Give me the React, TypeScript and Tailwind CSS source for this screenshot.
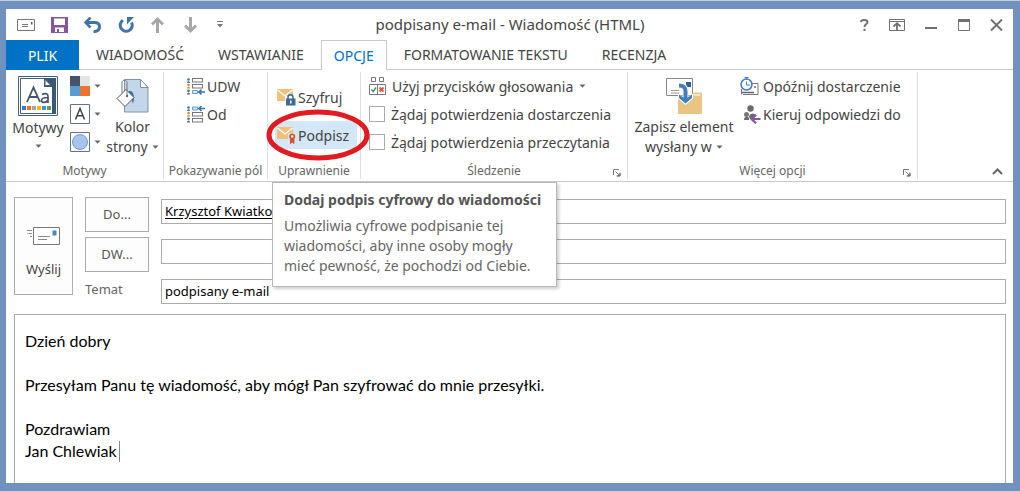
import React, { useState } from 'react';

const tabs = ['WIADOMOŚĆ', 'WSTAWIANIE', 'OPCJE', 'FORMATOWANIE TEKSTU', 'RECENZJA'];

const initialBody = `Dzień dobry

Przesyłam Panu tę wiadomość, aby mógł Pan szyfrować do mnie przesyłki.

Pozdrawiam
Jan Chlewiak`;

function Arrow() {
    return (
        <svg width="7" height="4" viewBox="0 0 7 4" className="shrink-0" aria-hidden="true">
            <path d="M0.5 0.5h6L3.5 3.7z" fill="#666" />
        </svg>
    );
}

function Launcher({ label }: { label: string }) {
    return (
        <button type="button" aria-label={label} className="absolute right-1.5 bottom-0.5">
            <svg width="8" height="8" viewBox="0 0 8 8" fill="none" stroke="#777">
                <path d="M0.5 6V0.5H6M2.5 2.5l4 4M7 3.5V7H3.5" />
                <path d="M7 4.5V7H4.5z" fill="#777" />
            </svg>
        </button>
    );
}

function Group({ label, className, launcher, children }: { label: string; className: string; launcher?: boolean; children: React.ReactNode }) {
    return (
        <section aria-label={label} className={`relative flex shrink-0 flex-col border-r border-[#dcdfe2] ${className}`}>
            <div className="flex flex-1">{children}</div>
            <div className="text-center text-[12px] leading-4 text-[#666]">{label}</div>
            {launcher && <Launcher label={`${label}: opcje`} />}
        </section>
    );
}

function QuickAccess() {
    return (
        <div className="flex items-center">
            <svg width="18" height="12" viewBox="0 0 18 12" className="mr-4" fill="none" stroke="#777" aria-hidden="true">
                <path d="M0.5 0.5h17v11H0.5zM5 5.5h6M5 7.5h6" />
                <path d="M14 3h1.5v2.5H14z" fill="#555" stroke="none" />
            </svg>
            <button type="button" aria-label="Zapisz" className="mr-4">
                <svg width="17" height="16" viewBox="0 0 17 16">
                    <path fillRule="evenodd" d="M0 0h17v16H0zM3 1.5V8h11V1.5zM4 10.5V15h2v-3h2v3h5v-4.5z" fill="#8356a0" />
                </svg>
            </button>
            <button type="button" aria-label="Cofnij" className="mr-4">
                <svg width="18" height="16" viewBox="0 0 18 16" fill="none" stroke="#3f74ab">
                    <path d="M3 5.5h7.5c3 0 5 1.5 5 4.2 0 3-2.2 4.8-6 5" strokeWidth="3" />
                    <path d="M6.5 0.5L1.5 5.5l5 5" strokeWidth="2.6" />
                </svg>
            </button>
            <button type="button" aria-label="Ponów" className="mr-4">
                <svg width="17" height="16" viewBox="0 0 17 16" fill="none" stroke="#3f74ab">
                    <path d="M5 3.2A6 6 0 1 0 13.5 5.5" strokeWidth="3" />
                    <path d="M9 7.5V0h7l-2.5 2.5z" fill="#3f74ab" stroke="none" />
                </svg>
            </button>
            <button type="button" aria-label="Poprzedni element" className="mr-5">
                <svg width="13" height="16" viewBox="0 0 13 16" fill="none" stroke="#a6a6a6">
                    <path d="M6.5 16V2" strokeWidth="3" />
                    <path d="M1 7.5L6.5 2 12 7.5" strokeWidth="2.8" />
                </svg>
            </button>
            <button type="button" aria-label="Następny element" className="mr-5">
                <svg width="13" height="16" viewBox="0 0 13 16" fill="none" stroke="#a6a6a6">
                    <path d="M6.5 0v14" strokeWidth="3" />
                    <path d="M1 8.5l5.5 5.5L12 8.5" strokeWidth="2.8" />
                </svg>
            </button>
            <button type="button" aria-label="Dostosuj pasek">
                <svg width="6" height="7" viewBox="0 0 6 7">
                    <path d="M0 0h6v1H0zM0 3h6L3 6.5z" fill="#777" />
                </svg>
            </button>
        </div>
    );
}

function WindowButtons() {
    return (
        <div className="flex items-center">
            <button type="button" aria-label="Pomoc" className="mr-5">
                <svg width="9" height="12" viewBox="0 0 9 12" fill="none" stroke="#707070" strokeWidth="2">
                    <path d="M1 3c0-1.3 1.3-2 3.2-2S7.5 1.8 7.5 3.2c0 1.8-3 1.8-3 4.8M4.5 9.8V12" />
                </svg>
            </button>
            <button type="button" aria-label="Opcje wyświetlania wstążki" className="mr-5">
                <svg width="16" height="12" viewBox="0 0 16 12" fill="none" stroke="#707070">
                    <path d="M0.5 0.5h15v11H0.5zM0.5 2.5h15" />
                    <path d="M8 11V4.5M4.5 7.5L8 4.2l3.5 3.3" strokeWidth="1.8" />
                </svg>
            </button>
            <button type="button" aria-label="Minimalizuj" className="mr-5">
                <svg width="13" height="12" viewBox="0 0 13 12"><path d="M0 8h12v2H0z" fill="#707070" /></svg>
            </button>
            <button type="button" aria-label="Maksymalizuj" className="mr-5">
                <svg width="12" height="12" viewBox="0 0 12 12" fill="none" stroke="#707070">
                    <path d="M0.5 0.5h11v11H0.5z" />
                    <path d="M0 1.5h12" strokeWidth="3" />
                </svg>
            </button>
            <button type="button" aria-label="Zamknij">
                <svg width="13" height="12" viewBox="0 0 13 12" fill="none" stroke="#707070" strokeWidth="2">
                    <path d="M1 0.5l11 11M12 0.5l-11 11" />
                </svg>
            </button>
        </div>
    );
}

function ThemesIcon() {
    return (
        <svg width="40" height="40" viewBox="0 0 40 40" aria-hidden="true">
            <path d="M0.5 0.5h39v39H0.5z" fill="#fff" stroke="#44607c" />
            <path d="M2.5 2.5H28l9.5 9.5v25.5H2.5z" fill="#fff" stroke="#44607c" />
            <path d="M26 2h12v36h-4V11H26z" fill="#3d5875" />
            <path d="M27 3.5l6 6h-6z" fill="#fff" stroke="#44607c" />
            <path d="M9 26L15.5 11.5 22 26M11.2 21h8.6" fill="none" stroke="#44546a" strokeWidth="1.8" />
            <path d="M24 18.5c4-2 6-.5 6 2V27M30 21.5c-3 0-6.5.2-6.5 3 0 2.7 4.5 2.7 6.5-.5" fill="none" stroke="#44546a" strokeWidth="1.7" />
            <path d="M4 30h4v4H4z" fill="#3b78bd" />
            <path d="M9 30h4v4H9z" fill="#ec7424" />
            <path d="M14 30h4v4h-4z" fill="#a5a5a5" />
            <path d="M19 30h4v4h-4z" fill="#f5b800" />
            <path d="M24 30h4v4h-4z" fill="#4b8fd0" />
            <path d="M29 30h4v4h-4z" fill="#61a047" />
        </svg>
    );
}

function ColorsIcon() {
    return (
        <svg width="20" height="20" viewBox="0 0 20 20" aria-hidden="true">
            <path d="M0 0h10v10H0z" fill="#44546a" />
            <path d="M10 0h10v10H10z" fill="#e4e4e4" />
            <path d="M0 10h10v10H0z" fill="#5b9bd5" />
            <path d="M10 10h10v10H10z" fill="#ed7430" />
        </svg>
    );
}

function FontsIcon() {
    return (
        <svg width="20" height="20" viewBox="0 0 20 20" fill="none" aria-hidden="true">
            <path d="M0.5 0.5h19v19H0.5z" stroke="#627388" />
            <path d="M5.5 15.5l4.5-11 4.5 11M7 11.8h6" stroke="#444" strokeWidth="1.5" />
        </svg>
    );
}

function EffectsIcon() {
    return (
        <svg width="20" height="20" viewBox="0 0 20 20" aria-hidden="true">
            <path d="M0.5 0.5h19v19H0.5z" fill="#fff" stroke="#627388" />
            <circle cx="10" cy="10" r="7.5" fill="#a5c3ec" stroke="#6f9bd1" />
        </svg>
    );
}

function PageColorIcon() {
    return (
        <svg width="33" height="35" viewBox="0 0 33 35" aria-hidden="true">
            <path d="M8.5 1.5h16l7.5 8v24.5H8.5z" fill="#c3d6ea" stroke="#7e93a8" />
            <path d="M24.5 1.5v8H32z" fill="#fff" stroke="#7e93a8" />
            <path d="M13 13c5-1 6 6 4 13-1-4-2-6-5-8z" fill="#2e75b6" />
            <path d="M1 20.5l9-9 8 8-9 9z" fill="#fff" stroke="#555" />
            <path d="M6 15.5V4.5c0-3 5-3 5 0V18" fill="none" stroke="#777" />
            <circle cx="11" cy="18" r="1.2" fill="#666" />
        </svg>
    );
}

function FieldIcon({ flip }: { flip?: boolean }) {
    const arrowY = flip ? 2.5 : 14;
    const rows = flip ? [6.5, 12.5] : [0.5, 6.5];
    return (
        <svg width="19" height="17" viewBox="0 0 19 17" fill="none" aria-hidden="true">
            {rows.map(y => (
                <rect key={y} x="6.5" y={y} width="10" height="3.5" stroke="#777" />
            ))}
            <path d={`M6.5 ${arrowY - 1.5}h5v3h-5z`} fill="#d5e7f7" stroke="#6c9cc9" />
            <path d={`M12 ${arrowY}h7M15.5 ${arrowY - 2.5}L13 ${arrowY}l2.5 2.5`} stroke="#2e75b6" strokeWidth="1.5" />
            <circle cx="2.5" cy="1.5" r="1.3" fill="#3f74ab" />
            <path d="M1 5c0-2.5 3-2.5 3 0z" fill="#3f74ab" />
            <circle cx="2.5" cy="7" r="1.3" fill="#e08a43" />
            <path d="M1 10.5c0-2.5 3-2.5 3 0z" fill="#e08a43" />
            <circle cx="2.5" cy="12.7" r="1.3" fill="#666" />
            <path d="M1 16.5c0-2.8 3-2.8 3 0z" fill="#666" />
        </svg>
    );
}

function EnvelopeIcon({ kind }: { kind: 'lock' | 'ribbon' }) {
    return (
        <svg width="19" height="17" viewBox="0 0 19 17" aria-hidden="true">
            <path d="M0 0h16v12H0z" fill="#efc17b" />
            <path d="M0.5 1L8 7l7.5-6" fill="none" stroke="#fff" strokeWidth="1.2" />
            {kind === 'lock' ? (
                <g>
                    <path d="M8 7h11v10H8z" fill="#fff" />
                    <path d="M11 10V8c0-3 5-3 5 0v2" fill="none" stroke="#3c6997" strokeWidth="1.5" />
                    <path d="M9 9.5h9.5V16.5H9z" fill="#3c6997" />
                    <path d="M13 11.5h1.5v3H13z" fill="#fff" />
                </g>
            ) : (
                <g>
                    <path d="M11 6h8v11h-8z" fill="#d3e7f8" />
                    <path d="M13.5 12v4.5l1.7-1.5 1.7 1.5V12" fill="#d9502e" stroke="#d9502e" />
                    <circle cx="15.2" cy="9.5" r="2.2" fill="#fff" stroke="#d9502e" strokeWidth="1.7" />
                </g>
            )}
        </svg>
    );
}

function VoteIcon() {
    return (
        <svg width="17" height="18" viewBox="0 0 17 18" fill="none" aria-hidden="true">
            <path d="M2.5 0.5h4v4h-4zM10.5 0.5h4v4h-4zM0.5 7.5h16v10H0.5zM8.5 7.5v10" stroke="#777" />
            <path d="M2.5 12.5l1.7 2L7 10.5" stroke="#2f9e6a" strokeWidth="1.4" />
            <path d="M10.5 10.5l4 4M14.5 10.5l-4 4" stroke="#e0563a" strokeWidth="1.8" />
        </svg>
    );
}

function SaveSentIcon() {
    return (
        <svg width="36" height="37" viewBox="0 0 36 37" aria-hidden="true">
            <path d="M0.5 0.5h26v17H0.5z" fill="#fff" stroke="#888" />
            <path d="M5 12.5h8M5 15h8" stroke="#999" />
            <path d="M12 18h13l3-3.5h8V36H12z" fill="#e9c583" />
            <path d="M27.5 17h7" stroke="#fff" />
            <path d="M20 4h5v5h-5z" fill="#2f6190" />
            <path d="M13 7.5c5 0 6.5 2 6.5 6V22" fill="none" stroke="#fff" strokeWidth="6" />
            <path d="M12 15.5l7.5 5 7.5-5v5l-7.5 6.5L12 20.5z" fill="#fff" />
            <path d="M13 7.5c5 0 6.5 2 6.5 6V22" fill="none" stroke="#3f7fbe" strokeWidth="4" />
            <path d="M13 16.5l6.5 4.5 6.5-4.5v3.5l-6.5 5.5L13 20z" fill="#3f7fbe" />
        </svg>
    );
}

function DelayIcon() {
    return (
        <svg width="19" height="18" viewBox="0 0 19 18" fill="none" aria-hidden="true">
            <path d="M11 6.5h7v11H3M1.5 12v5.5" stroke="#777" />
            <path d="M1 15.5h13M15 9v2" stroke="#666" strokeWidth="1.5" />
            <circle cx="6.5" cy="7.5" r="5.5" fill="#fff" stroke="#3f7fbe" strokeWidth="1.5" />
            <path d="M4.5 0.5h4M6.5 0.5v2M6.5 4.5v3.5H10" stroke="#3f7fbe" />
        </svg>
    );
}

function DirectIcon() {
    return (
        <svg width="17" height="19" viewBox="0 0 17 19" aria-hidden="true">
            <circle cx="6.5" cy="3.5" r="3.2" fill="#6a6a6a" />
            <circle cx="2.5" cy="9.5" r="2.5" fill="#777" />
            <path d="M0 15c0-4 4-4 5-2v2zM5 11.5c1-4.5 7-3.5 7-.5l-3 3H6z" fill="#6a6a6a" />
            <path d="M16.5 14H8.5M12 9.7L7.5 14l4.5 4.3" fill="none" stroke="#8457a5" strokeWidth="2.2" />
        </svg>
    );
}

function Ribbon() {
    return (
        <div className="flex border-b border-[#c5cacf] pt-0.5 pb-0.5 h-[112px] text-[14px] text-[#444]">
            <Group label="Motywy" className="w-[158px]">
                <button type="button" className="flex w-16 flex-col items-center pt-1">
                    <ThemesIcon />
                    <span className="mt-0.5 leading-5">Motywy</span>
                    <span className="flex h-4 items-center"><Arrow /></span>
                </button>
                <div className="flex w-8 flex-col gap-2 pt-1">
                    <button type="button" aria-label="Kolory" className="flex items-center gap-1"><ColorsIcon /><Arrow /></button>
                    <button type="button" aria-label="Czcionki" className="flex items-center gap-1"><FontsIcon /><Arrow /></button>
                    <button type="button" aria-label="Efekty" className="flex items-center gap-1"><EffectsIcon /><Arrow /></button>
                </div>
                <button type="button" className="flex flex-1 flex-col items-center pt-1.5">
                    <PageColorIcon />
                    <span className="mt-1 leading-5">Kolor</span>
                    <span className="flex items-center gap-1 leading-5">strony <Arrow /></span>
                </button>
            </Group>
            <Group label="Pokazywanie pól" className="w-[104px]">
                <div className="flex flex-col pl-[22px]">
                    <button type="button" className="flex h-7 items-center gap-0.5"><FieldIcon />UDW</button>
                    <button type="button" className="flex h-7 items-center gap-0.5"><FieldIcon flip />Od</button>
                </div>
            </Group>
            <Group label="Uprawnienie" className="w-[93px]">
                <div className="flex flex-col gap-2.5 pt-[11px] pl-[7px]">
                    <button type="button" className="flex h-7 items-center gap-0.5 px-0.5"><EnvelopeIcon kind="lock" />Szyfruj</button>
                    <div className="relative">
                        <button type="button" className="flex h-7 w-[82px] items-center gap-0.5 bg-[#d3e7f8] px-0.5"><EnvelopeIcon kind="ribbon" />Podpisz</button>
                        <svg width="106" height="52" viewBox="0 0 106 52" className="pointer-events-none absolute -top-3 -left-2.5 z-20" fill="none" aria-hidden="true">
                            <ellipse cx="53" cy="26" rx="49" ry="23" stroke="#e01b22" strokeWidth="5" />
                        </svg>
                        <div role="tooltip" className="absolute top-[61px] -left-[3px] z-10 w-[285px] border border-[#b8b8b8] bg-white px-[11px] pt-[7px] pb-2.5 text-[14px] leading-5 whitespace-nowrap text-[#666] shadow-[2px_2px_3px_rgba(0,0,0,0.2)]">
                            <p className="mb-1.5 font-bold text-[#555]">Dodaj podpis cyfrowy do wiadomości</p>
                            <p>Umożliwia cyfrowe podpisanie tej<br />wiadomości, aby inne osoby mogły<br />mieć pewność, że pochodzi od Ciebie.</p>
                        </div>
                    </div>
                </div>
            </Group>
            <Group label="Śledzenie" className="w-[267px]" launcher>
                <div className="flex flex-col pl-2">
                    <button type="button" className="flex h-7 items-center gap-1.5"><VoteIcon />Użyj przycisków głosowania <Arrow /></button>
                    <label className="flex h-7 items-center gap-1.5">
                        <input type="checkbox" className="size-4 appearance-none border border-[#aaa] bg-white checked:bg-[#0072c6]" />
                        Żądaj potwierdzenia dostarczenia
                    </label>
                    <label className="flex h-7 items-center gap-1.5">
                        <input type="checkbox" className="size-4 appearance-none border border-[#aaa] bg-white checked:bg-[#0072c6]" />
                        Żądaj potwierdzenia przeczytania
                    </label>
                </div>
            </Group>
            <Group label="Więcej opcji" className="w-[290px]" launcher>
                <button type="button" className="flex w-[112px] flex-col items-center pt-1.5">
                    <SaveSentIcon />
                    <span className="mt-0.5 leading-5">Zapisz element</span>
                    <span className="flex items-center gap-1 leading-5">wysłany w <Arrow /></span>
                </button>
                <div className="flex flex-col">
                    <button type="button" className="flex h-7 items-center gap-1"><DelayIcon />Opóźnij dostarczenie</button>
                    <button type="button" className="flex h-7 items-center gap-0.5 pl-1"><DirectIcon />Kieruj odpowiedzi do</button>
                </div>
            </Group>
            <div className="flex flex-1 items-end justify-end pr-2.5 pb-1">
                <button type="button" aria-label="Zwiń wstążkę">
                    <svg width="11" height="7" viewBox="0 0 11 7" fill="none"><path d="M1 6l4.5-4.5L10 6" stroke="#666" strokeWidth="2" /></svg>
                </button>
            </div>
        </div>
    );
}

export default function App() {
    const [activeTab, setActiveTab] = useState('OPCJE');
    const [to, setTo] = useState('Krzysztof Kwiatkow');
    const [cc, setCc] = useState('');
    const [subject, setSubject] = useState('podpisany e-mail');
    const [body, setBody] = useState(initialBody);

    const fieldClass = 'mt-0.5 h-[25px] w-full border border-[#ababab] bg-white px-[3px] pb-0.5 text-[13px] text-black outline-none';
    const buttonClass = 'h-[35px] w-16 border border-[#ababab] bg-[#fdfdfd] text-[13px] text-[#555]';

    return (
        <div className="flex min-h-screen flex-col border-y border-[#c3d0df] bg-[#7192be] pt-2 pr-[7px] pb-2 pl-1.5 font-['Noto_Sans','Open_Sans',sans-serif]">
            <div className="flex flex-1 flex-col bg-white">
                <header className="grid h-[31px] grid-cols-[1fr_auto_1fr] items-center pr-2.5 pl-[11px]">
                    <QuickAccess />
                    <h1 className="text-[15px] text-[#444]">podpisany e-mail - Wiadomość (HTML)</h1>
                    <div className="flex justify-end"><WindowButtons /></div>
                </header>

                <nav className="flex h-[30px] text-[14px] text-[#444]">
                    <button type="button" className="w-[73px] bg-[#0072c6] text-white">PLIK</button>
                    {tabs.map(tab => (
                        <button
                            key={tab}
                            type="button"
                            onClick={() => setActiveTab(tab)}
                            className={tab === activeTab
                                ? 'border border-b-0 border-[#c5cacf] px-3 text-[#0072c6]'
                                : 'border-b border-[#c5cacf] px-[17px]'}
                        >
                            {tab}
                        </button>
                    ))}
                    <div className="flex-1 border-b border-[#c5cacf]" />
                </nav>

                <Ribbon />

                <main className="flex flex-1 flex-col pr-[7px] pl-2">
                    <div className="flex pt-[15px]">
                        <button type="button" className="flex h-[98px] w-[59px] shrink-0 flex-col items-center border border-[#ababab] bg-[#fdfdfd] pt-[29px] text-[13px] text-[#444]">
                            <svg width="33" height="18" viewBox="0 0 33 18" fill="none" aria-hidden="true">
                                <path d="M6.5 0.5h26v17H6.5z" fill="#fff" stroke="#777" />
                                <path d="M11 9.5h12M11 12.5h9M0 3.5h5M2 6.5h3M0.5 6.5h1M3 9.5h2" stroke="#888" />
                                <path d="M25.5 3.5h4v5h-4z" fill="#4d86bb" />
                            </svg>
                            <span className="mt-3.5 leading-5">Wyślij</span>
                        </button>
                        <div className="ml-3 grid flex-1 grid-cols-[64px_1fr] grid-rows-[40px_40px_27px] items-start gap-x-3">
                            <button type="button" className={buttonClass}>Do...</button>
                            <input aria-label="Do" value={to} onChange={e => setTo(e.target.value)} className={`${fieldClass} underline underline-offset-2`} />
                            <button type="button" className={buttonClass}>DW...</button>
                            <input aria-label="DW" value={cc} onChange={e => setCc(e.target.value)} className={fieldClass} />
                            <label htmlFor="subject" className="text-[13px] leading-6 text-[#666]">Temat</label>
                            <input id="subject" value={subject} onChange={e => setSubject(e.target.value)} className={fieldClass} />
                        </div>
                    </div>
                    <div className="relative mt-2.5 flex flex-1 border border-b-0 border-[#ababab]">
                        <textarea
                            aria-label="Treść wiadomości"
                            value={body}
                            onChange={e => setBody(e.target.value)}
                            className="w-full resize-none overflow-hidden px-2.5 pt-[15px] font-['Lato',sans-serif] text-[16px] leading-[22px] text-black outline-none"
                        />
                        <span className="absolute top-[126px] left-[104px] h-[21px] w-px bg-[#888]" />
                    </div>
                </main>
            </div>
        </div>
    );
}
